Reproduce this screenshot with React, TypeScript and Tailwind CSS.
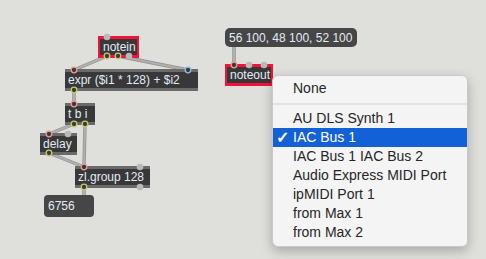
import React from "react";

type Port = { x: number; y: number; c: string };

const PINK = "#e89a9a";
const YEL = "#c9c86e";
const BLUE = "#8cc0dc";
const GRAY = "g";

const cords: [number, number, number, number][] = [
  [107, 56, 74, 70],
  [118, 56, 188, 70],
  [74, 90, 74, 104],
  [74, 124, 49, 134],
  [85, 124, 84, 167],
  [49, 153, 84, 167],
  [84, 187, 84, 196],
  [234, 46, 234, 65],
];

const ports: Port[] = [
  { x: 107, y: 37, c: GRAY },
  { x: 107, y: 56, c: YEL },
  { x: 118, y: 56, c: YEL },
  { x: 129, y: 56, c: GRAY },
  { x: 74, y: 70, c: PINK },
  { x: 188, y: 70, c: BLUE },
  { x: 74, y: 90, c: YEL },
  { x: 74, y: 104, c: PINK },
  { x: 74, y: 124, c: YEL },
  { x: 85, y: 124, c: YEL },
  { x: 49, y: 134, c: PINK },
  { x: 68, y: 134, c: GRAY },
  { x: 49, y: 153, c: YEL },
  { x: 84, y: 167, c: PINK },
  { x: 140, y: 167, c: GRAY },
  { x: 84, y: 187, c: YEL },
  { x: 140, y: 187, c: GRAY },
  { x: 234, y: 65, c: PINK },
  { x: 249, y: 65, c: GRAY },
  { x: 264, y: 65, c: GRAY },
];

function MaxObject({ x, y, w, label, red }: { x: number; y: number; w: number; label: string; red?: boolean }) {
  return (
    <div
      className={`absolute flex flex-col ${red ? "bg-[#f5113a] px-[2px] py-[3px]" : "bg-[#6a6a6a] py-[3px]"}`}
      style={{ left: x, top: y, width: w }}
    >
      <div className="bg-[#383838] h-[16px] flex items-center pl-[3px] text-[12px] leading-none text-[#e3ecf6] whitespace-nowrap">
        {label}
      </div>
    </div>
  );
}

const menuItems = [
  "AU DLS Synth 1",
  "IAC Bus 1",
  "IAC Bus 1 IAC Bus 2",
  "Audio Express MIDI Port",
  "ipMIDI Port 1",
  "from Max 1",
  "from Max 2",
];

export default function App() {
  return (
    <div
      className="relative w-[486px] h-[259px] bg-[#dfe0db] overflow-hidden"
      style={{ fontFamily: '"Liberation Sans", Arial, sans-serif' }}
    >
      {/* patch cords */}
      <svg className="absolute inset-0" width={486} height={259}>
        {cords.map(([x1, y1, x2, y2], i) => (
          <g key={i}>
            <line x1={x1} y1={y1} x2={x2} y2={y2} stroke="#8f8f8f" strokeWidth={3.4} />
            <line x1={x1} y1={y1} x2={x2} y2={y2} stroke="#b0b0b0" strokeWidth={2} />
          </g>
        ))}
      </svg>

      <MaxObject x={98} y={36} w={41} label="notein" red />
      <MaxObject x={65} y={69} w={133} label="expr ($i1 * 128) + $i2" />
      <MaxObject x={65} y={103} w={30} label="t b i" />
      <MaxObject x={40} y={133} w={37} label="delay" />
      <MaxObject x={75} y={166} w={75} label="zl.group 128" />
      <MaxObject x={225} y={64} w={48} label="noteout" red />

      {/* number box */}
      <div className="absolute left-[44px] top-[195px] w-[50px] h-[22px] rounded-[4px] bg-[#464646] flex items-center pl-[4px] text-[12px] text-[#e3ecf6]">
        6756
      </div>

      {/* message box */}
      <div className="absolute left-[225px] top-[28px] w-[132px] h-[19px] rounded-[5px] bg-[#464646] flex items-center pl-[4px] text-[12px] text-[#e3ecf6] whitespace-nowrap">
        56 100, 48 100, 52 100
      </div>

      {/* inlets / outlets */}
      <svg className="absolute inset-0 pointer-events-none" width={486} height={259}>
        {ports.map((p, i) =>
          p.c === GRAY ? (
            <circle key={i} cx={p.x} cy={p.y} r={3.3} fill="#b9b9b9" />
          ) : (
            <circle key={i} cx={p.x} cy={p.y} r={2.8} fill="#3a3a3a" stroke={p.c} strokeWidth={1.3} />
          )
        )}
      </svg>

      {/* popup menu */}
      <div className="absolute left-[272px] top-[75px] w-[196px] h-[172px] rounded-[6px] bg-[#f4f4f4] border border-[#c9c9c9] shadow-[0_4px_12px_rgba(0,0,0,0.25)] pt-[3px] text-[14px] text-[#262626]">
        <div className="h-[19px] flex items-center pl-[20px]">None</div>
        <div className="h-[11px] flex items-center">
          <div className="w-full h-[2px] bg-[#e2e2e2]" />
        </div>
        {menuItems.map((item) => {
          const sel = item === "IAC Bus 1";
          return (
            <div
              key={item}
              className={`h-[19px] flex items-center relative pl-[20px] whitespace-nowrap ${sel ? "bg-[#1361d6] text-white" : ""}`}
            >
              {sel && <span className="absolute left-[3px] text-[16px] font-bold">✓</span>}
              {item}
            </div>
          );
        })}
      </div>
    </div>
  );
}
